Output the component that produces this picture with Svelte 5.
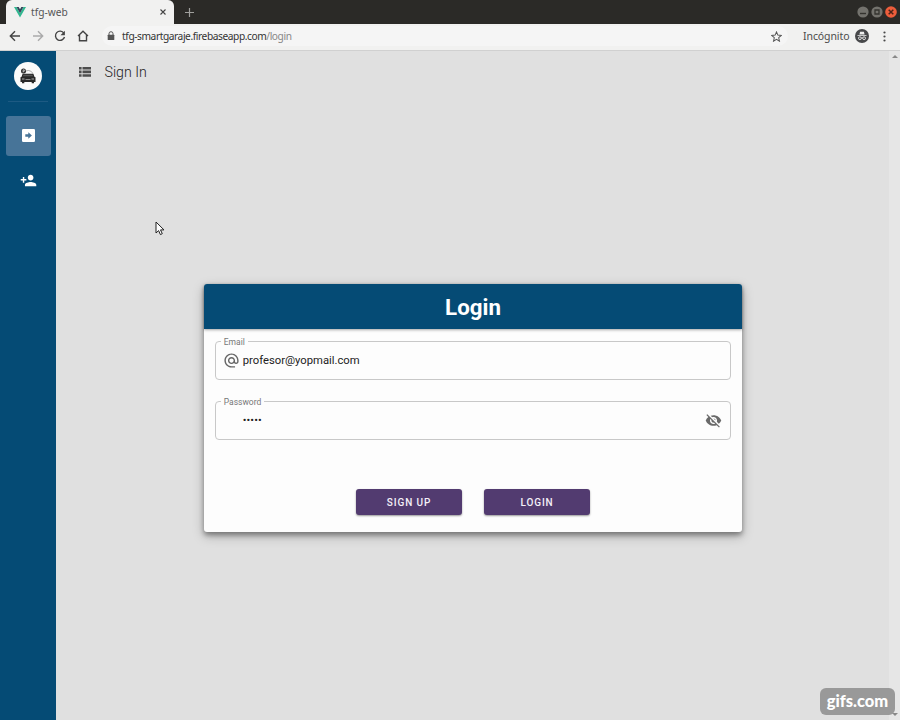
<script>
  let email = $state('profesor@yopmail.com');
  const dots = '•••••';
</script>

<div class="browser">
  <header class="tabs">
    <div class="tab">
      <svg class="vue" width="12" height="11" viewBox="0 0 12 11"><path fill="#31b890" d="M0 0h2.500L6 6.200 9.500 0H12L6 10.500z" /><path fill="#33475b" d="M2.500 0h2.200L6 2.300 7.300 0h2.200L6 6.200z" /></svg>
      <span>tfg-web</span>
      <svg class="x" width="6" height="6" viewBox="0 0 6 6"><path d="M.5.5l5 5m0-5l-5 5" stroke="#444" stroke-width="1.100" /></svg>
    </div>
    <svg class="plus" width="9" height="9" viewBox="0 0 9 9"><path d="M4.500 0v9M0 4.500h9" stroke="#a0a09d" stroke-width="1.200" /></svg>
    <div class="win">
      <svg width="12" height="12" viewBox="0 0 12 12"><circle cx="6" cy="6" r="5.600" fill="#73726d" /><path d="M3 7.500h6" stroke="#34332f" stroke-width="1.400" /></svg>
      <svg width="12" height="12" viewBox="0 0 12 12"><circle cx="6" cy="6" r="5.600" fill="#73726d" /><path d="M4 4h4v4H4z" fill="none" stroke="#34332f" stroke-width="1.300" /></svg>
      <svg width="12" height="12" viewBox="0 0 12 12"><circle cx="6" cy="6" r="5.800" fill="#ed5d3b" /><path d="M3.700 3.700l4.600 4.600m0-4.600L3.700 8.300" stroke="#4d2318" stroke-width="1.500" /></svg>
    </div>
  </header>

  <div class="toolbar">
    <div class="nav">
      <svg width="12" height="12" viewBox="0 0 12 12"><path d="M11 6H1.500M6 1.300L1.300 6 6 10.700" /></svg>
      <svg width="12" height="12" viewBox="0 0 12 12" class="dim"><path d="M1 6h9.500M6 1.300L10.700 6 6 10.700" /></svg>
      <svg width="12" height="12" viewBox="0 0 12 12"><path d="M9.900 3.200A4.600 4.600 0 1 0 10.500 7" /><path d="M10.900.8v4.400H6.500z" class="solid" /></svg>
      <svg width="12" height="12" viewBox="0 0 12 12"><path d="M1 6l5-4.700L11 6M2.500 5v5.800h7V5" /></svg>
    </div>
    <div class="address">
      <svg width="8" height="10" viewBox="0 0 8 10"><path d="M2 4V2.700a2 2 0 0 1 4 0V4" fill="none" stroke="#555" stroke-width="1" /><rect x=".7" y="3.700" width="6.600" height="5.300" rx=".6" fill="#555" /></svg>
      <span class="url">tfg-smartgaraje.firebaseapp.com<i>/login</i></span>
      <svg class="star" width="11" height="11" viewBox="0 0 24 24"><path d="M12 2l3 7 7.500.7-5.700 5 1.700 7.500-6.500-4-6.500 4 1.700-7.500-5.700-5L9 9z" fill="none" stroke="#555" stroke-width="2.200" /></svg>
    </div>
    <span class="incog">Incógnito</span>
    <svg class="spy" width="14" height="14" viewBox="0 0 14 14"><circle cx="7" cy="7" r="7" fill="#47484a" /><path d="M4.400 5.400l.7-2.700h3.800l.7 2.700zM2.500 6h9v.8h-9z" fill="#eee" /><g fill="none" stroke="#eee" stroke-width=".9"><circle cx="4.900" cy="9.200" r="1.400" /><circle cx="9.100" cy="9.200" r="1.400" /><path d="M6.300 9q.7-.5 1.400 0" /></g></svg>
    <svg class="more" width="3" height="11" viewBox="0 0 3 11" fill="#484848"><circle cx="1.500" cy="1.500" r="1.100" /><circle cx="1.500" cy="5.500" r="1.100" /><circle cx="1.500" cy="9.500" r="1.100" /></svg>
  </div>

  <div class="page">
    <aside>
      <div class="logo">
        <svg width="16" height="16" viewBox="0 0 16 16"><path d="M3.500 4.600Q9 0 13 5.400" fill="none" stroke="#777" stroke-width=".6" /><circle cx="3.500" cy="3" r="2.500" fill="#292929" /><path d="M3.100 4.500V1.800h.9a.7.700 0 0 1 0 1.500h-.9" fill="none" stroke="#fff" stroke-width=".6" /><path d="M2.600 5.800h10.800l1 3 1.100.5v4.700H14V15.200h-2.300V14H4.300v1.200H2V14H.5V9.300l1.100-.5z" fill="#292929" /><path d="M3.600 6.700h8.800l.6 1.500H3z" fill="#555" /><path d="M2 10.400h2.500v1H2zm9.500 0H14v1h-2.500zM5.500 11.200h5v.9h-5z" fill="#aaa" /></svg>
      </div>
      <hr />
      <button class="item active" aria-label="Sign In">
        <svg width="13" height="13" viewBox="0 0 13 13"><rect width="13" height="13" rx="1.200" fill="#fff" /><path d="M3.300 5.200h3V3.200l3.600 3.300-3.600 3.300V7.800h-3z" fill="#477498" /></svg>
      </button>
      <button class="item" aria-label="Sign Up">
        <svg width="17" height="17" viewBox="0 0 24 24" fill="#fff"><path d="M15 12c2.210 0 4-1.790 4-4s-1.790-4-4-4-4 1.790-4 4 1.790 4 4 4zm-9-2V7H4v3H1v2h3v3h2v-3h3v-2H6zm9 4c-2.670 0-8 1.340-8 4v2h16v-2c0-2.660-5.330-4-8-4z" /></svg>
      </button>
    </aside>

    <main>
      <div class="title">
        <svg width="12" height="10" viewBox="0 0 12 10" fill="#4d4d4d"><path d="M0 0h2.600v2.600H0zM3.500 0H12v2.600H3.500zM0 3.600h2.600v2.600H0zM3.500 3.600H12v2.600H3.500zM0 7.200h2.600v2.600H0zM3.500 7.200H12v2.600H3.500z" /></svg>
        <h1>Sign In</h1>
      </div>
      <section class="card">
        <h2>Login</h2>
        <form>
          <div class="field">
            <span class="label">Email</span>
            <svg width="17" height="17" viewBox="0 0 24 24" fill="#666"><path d="M12 2C6.480 2 2 6.480 2 12s4.480 10 10 10h5v-2h-5c-4.340 0-8-3.660-8-8s3.660-8 8-8 8 3.660 8 8v1.430c0 .79-.71 1.570-1.500 1.570s-1.500-.78-1.500-1.570V12c0-2.760-2.240-5-5-5s-5 2.240-5 5 2.240 5 5 5c1.380 0 2.640-.56 3.540-1.470.65.89 1.770 1.470 2.960 1.470 1.970 0 3.500-1.600 3.500-3.570V12c0-5.520-4.480-10-10-10zm0 13c-1.660 0-3-1.340-3-3s1.340-3 3-3 3 1.340 3 3-1.340 3-3 3z" /></svg>
            <span class="value">{email}</span>
          </div>
          <div class="field">
            <span class="label">Password</span>
            <span class="value dots">{dots}</span>
            <svg class="eye" width="17" height="17" viewBox="0 0 24 24" fill="#6a6a6a"><path d="M12 7c2.760 0 5 2.240 5 5 0 .65-.13 1.260-.36 1.830l2.920 2.920c1.510-1.260 2.700-2.890 3.430-4.750-1.730-4.390-6-7.500-11-7.500-1.400 0-2.740.25-3.980.7l2.160 2.160C10.740 7.130 11.350 7 12 7zM2 4.270l2.280 2.280.46.46C3.080 8.300 1.780 10.020 1 12c1.730 4.390 6 7.500 11 7.500 1.550 0 3.030-.3 4.380-.84l.42.42L19.730 22 21 20.730 3.270 3 2 4.270zM7.530 9.800l1.550 1.550c-.05.21-.08.43-.08.65 0 1.660 1.340 3 3 3 .22 0 .44-.03.65-.08l1.550 1.550c-.67.33-1.410.53-2.200.53-2.760 0-5-2.240-5-5 0-.79.2-1.530.53-2.200zm4.310-.78l3.150 3.150.02-.16c0-1.660-1.340-3-3-3l-.17.01z" /></svg>
          </div>
          <div class="actions">
            <button type="button">SIGN UP</button>
            <button type="button">LOGIN</button>
          </div>
        </form>
      </section>
    </main>
    <div class="scroll"><i class="up"></i><i class="down"></i></div>
  </div>

  <svg class="cursor" width="10" height="15" viewBox="0 0 10 15"><path d="M1 1v11l2.600-2.400 1.800 4 1.900-.9-1.800-3.800H9z" fill="#fff" stroke="#222" stroke-width="1" /></svg>
  <div class="badge">gifs.com</div>
</div>

<style>
  :global(body) { margin: 0; overflow: hidden; }
  .browser { width: 900px; height: 720px; display: flex; flex-direction: column; position: relative; overflow: hidden; font-family: Roboto, sans-serif; }
  svg { display: block; flex: none; }
  .tabs { height: 24px; flex: none; background: #2b2a27; display: flex; align-items: center; padding-left: 6px; }
  .tab { width: 168px; height: 24px; box-sizing: border-box; background: #f1f1f0; border-radius: 6px 6px 0 0; display: flex; align-items: center; padding: 0 8px; font: 10.200px/24px "Noto Sans", sans-serif; color: #555; }
  .tab span { margin-left: 5px; }
  .x { margin-left: auto; }
  .plus { margin-left: 11px; }
  .win { display: flex; gap: 2px; margin-left: auto; padding-right: 3px; }
  .toolbar { height: 26px; flex: none; background: #f1f1f0; border-bottom: 1px solid #d0d0d0; display: flex; align-items: center; font: 10.800px "Noto Sans", sans-serif; color: #4c4c4c; }
  .toolbar > * { margin-bottom: 2px; }
  .nav { display: flex; gap: 10.700px; padding-left: 9px; fill: none; stroke: #444; stroke-width: 1.400; }
  .dim { stroke: #aaa; }
  .solid { fill: #444; stroke: none; }
  .address { margin-left: 13px; width: 686px; height: 20px; border-radius: 10px; background: #f5f5f5; display: flex; align-items: center; box-sizing: border-box; padding: 0 6px 0 5px; }
  .url { margin-left: 7px; font-size: 10.200px; letter-spacing: -.43px; color: #333; white-space: nowrap; }
  .url i { font-style: normal; color: #888; }
  .star { margin-left: auto; }
  .incog { margin-left: 15px; width: 52px; white-space: nowrap; font-size: 10.500px; letter-spacing: -.1px; }
  .more { margin-left: 14px; }
  .page { flex: 1; display: flex; min-height: 0; background: #e0e0e0; }
  aside { width: 56px; box-sizing: border-box; background: #054b75; display: flex; flex-direction: column; align-items: center; padding-top: 11px; }
  .logo { width: 28px; height: 28px; border-radius: 50%; background: #fafafa; display: flex; align-items: center; justify-content: center; }
  hr { width: 40px; height: 1px; border: 0; margin: 11px 0 14px; background: #1d5a83; }
  .item { width: 45px; height: 40px; box-sizing: border-box; padding: 0 0 1px; margin-bottom: 5px; border: 0; border-radius: 3px; background: none; display: flex; align-items: center; justify-content: center; }
  .active { background: #477498; }
  main { flex: 1; display: flex; flex-direction: column; align-items: center; }
  .title { align-self: flex-start; display: flex; align-items: center; height: 42px; padding-left: 23px; gap: 13.500px; }
  h1 { margin: 0; font-size: 14.200px; line-height: 20px; font-weight: 300; color: #222; }
  .card { width: 538.500px; height: 247.500px; margin: 191px 0 0 1px; border-radius: 3px; background: #fdfdfd; box-shadow: 0 3px 5px rgba(0,0,0,.35), 0 4px 12px rgba(0,0,0,.25); }
  h2 { margin: 0; height: 45px; border-radius: 3px 3px 0 0; background: #054b75; box-shadow: 0 1px 3px rgba(0,0,0,.35); text-align: center; font-size: 22.300px; line-height: 47px; font-weight: 700; color: #fff; }
  form { display: flex; flex-direction: column; padding: 12px 11px 0; }
  .field { position: relative; height: 39px; box-sizing: border-box; border: 1px solid #c8c8c8; border-radius: 4px; display: flex; align-items: center; padding: 0 8px 0 7px; margin-bottom: 21px; }
  .label { position: absolute; left: 5px; top: -6px; padding: 0 3px; background: #fdfdfd; font-size: 8.500px; line-height: 12px; color: #777; }
  .value { margin-left: 3px; font-size: 11.250px; color: #222; }
  .dots { margin-left: 20px; font-size: 11px; letter-spacing: .1px; }
  .eye { margin-left: auto; }
  .actions { display: flex; justify-content: center; gap: 22px; margin-top: 28px; }
  .actions button { width: 106px; height: 26px; border: 0; border-radius: 3px; background: #523b70; box-shadow: 0 1px 2px rgba(0,0,0,.4); padding: 0; color: #f4f0f8; font: 500 10px Roboto, sans-serif; letter-spacing: .9px; }
  .scroll { width: 11px; background: #e6e6e6; display: flex; flex-direction: column; justify-content: space-between; align-items: center; padding: 4px 0; box-sizing: border-box; }
  .scroll i { border: 3px solid transparent; width: 0; height: 0; }
  .up { border-bottom-color: #888 !important; border-top-width: 0 !important; }
  .down { border-top-color: #888 !important; border-bottom-width: 0 !important; }
  .cursor { position: absolute; left: 155px; top: 221px; }
  .badge { position: absolute; left: 820px; top: 688px; width: 75px; height: 27px; border-radius: 6px; background: #999; color: #fff; text-align: center; font: 900 16.500px/26px Lato, sans-serif; }
</style>
